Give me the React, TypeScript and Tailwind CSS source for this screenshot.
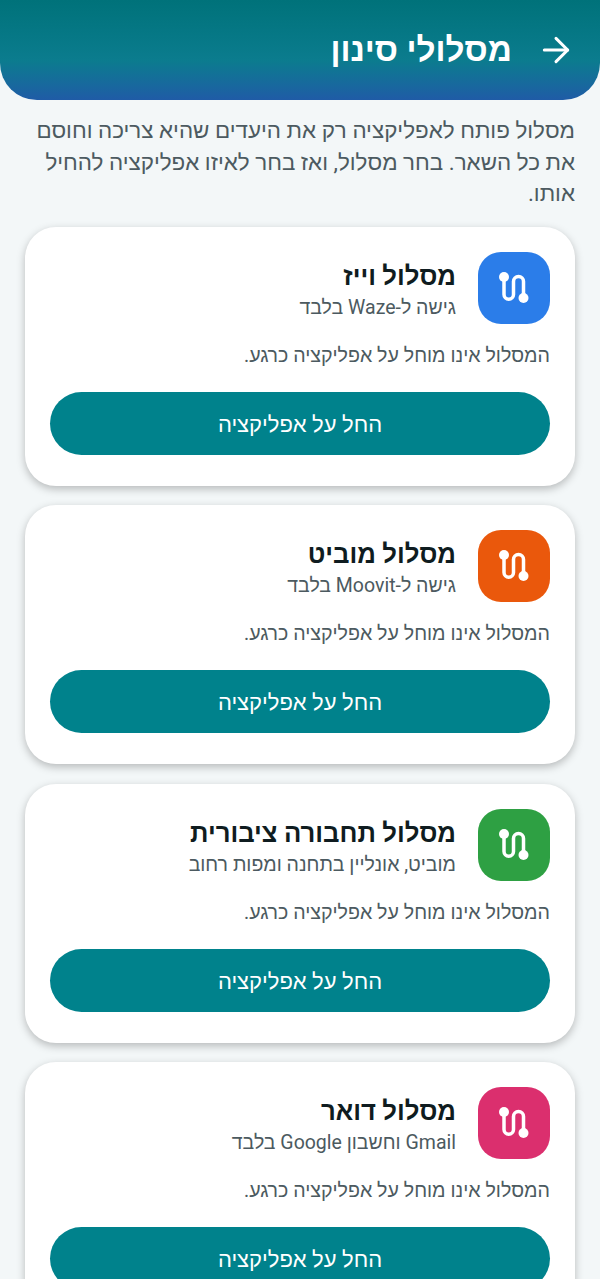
import { ArrowRight } from "lucide-react";

const tracks = [
  { title: "מסלול וייז", subtitle: "גישה ל-Waze בלבד", color: "bg-[#2b7de9]" },
  { title: "מסלול מוביט", subtitle: "גישה ל-Moovit בלבד", color: "bg-[#ea580c]" },
  { title: "מסלול תחבורה ציבורית", subtitle: "מוביט, אונליין בתחנה ומפות רחוב", color: "bg-[#2ea043]" },
  { title: "מסלול דואר", subtitle: "Gmail וחשבון Google בלבד", color: "bg-[#db2f6e]" },
];

function RouteIcon() {
  return (
    <svg width="40" height="40" viewBox="0 0 40 40" fill="none" stroke="white" strokeWidth="3.5" strokeLinecap="round">
      <circle cx="10" cy="9" r="5" fill="white" stroke="none" />
      <circle cx="29.5" cy="30" r="5" fill="white" stroke="none" />
      <path d="M10 9 V26.5 A4.75 4.75 0 0 0 19.5 26.5 V13.5 A5 5 0 0 1 29.5 13.5 V30" />
    </svg>
  );
}

function TrackCard({ title, subtitle, color }: { title: string; subtitle: string; color: string }) {
  return (
    <div className="bg-white rounded-[31px] px-[25px] pt-[25px] pb-[31px] shadow-[0_3px_8px_rgba(0,0,0,0.25)]">
      <div className="flex items-center gap-[22px]">
        <div className={`w-[72px] h-[72px] rounded-[23px] flex items-center justify-center shrink-0 ${color}`}>
          <RouteIcon />
        </div>
        <div className="pt-[6px]">
          <div className="text-[25.7px] leading-[32px] font-bold text-[#0f1c20]">{title}</div>
          <div className="mt-[2px] text-[19.5px] leading-[28px] text-[#4c5a60]">{subtitle}</div>
        </div>
      </div>
      <p className="mt-[18px] text-[19.6px] leading-[27px] text-[#4c5a60]">המסלול אינו מוחל על אפליקציה כרגע.</p>
      <button className="mt-[23px] pt-[2px] w-full h-[63px] rounded-full bg-[#00828c] text-white text-[22px] block">
        החל על אפליקציה
      </button>
    </div>
  );
}

export default function App() {
  return (
    <div dir="rtl" className="h-[1279px] overflow-hidden bg-[#f3f7f8] font-['Roboto','Noto_Sans',sans-serif]">
      <header className="h-[100px] rounded-b-[37px] bg-gradient-to-b from-[#00727a] via-[#0b7c8e] via-60% to-[#1f5ba6] flex items-center pr-[24px] gap-[24px] text-white">
        <ArrowRight size={40} strokeWidth={1.8} className="shrink-0" />
        <h1 className="text-[33.3px] font-bold leading-none">מסלולי סינון</h1>
      </header>
      <p className="px-[25px] mt-[15px] text-[22.4px] leading-[31.5px] text-[#4c5a60]">
        מסלול פותח לאפליקציה רק את היעדים שהיא צריכה וחוסם את כל השאר. בחר מסלול, ואז בחר לאיזו אפליקציה להחיל אותו.
      </p>
      <div className="px-[25px] mt-[17px] flex flex-col gap-[19.5px]">
        {tracks.map((t) => (
          <TrackCard key={t.title} {...t} />
        ))}
      </div>
    </div>
  );
}
